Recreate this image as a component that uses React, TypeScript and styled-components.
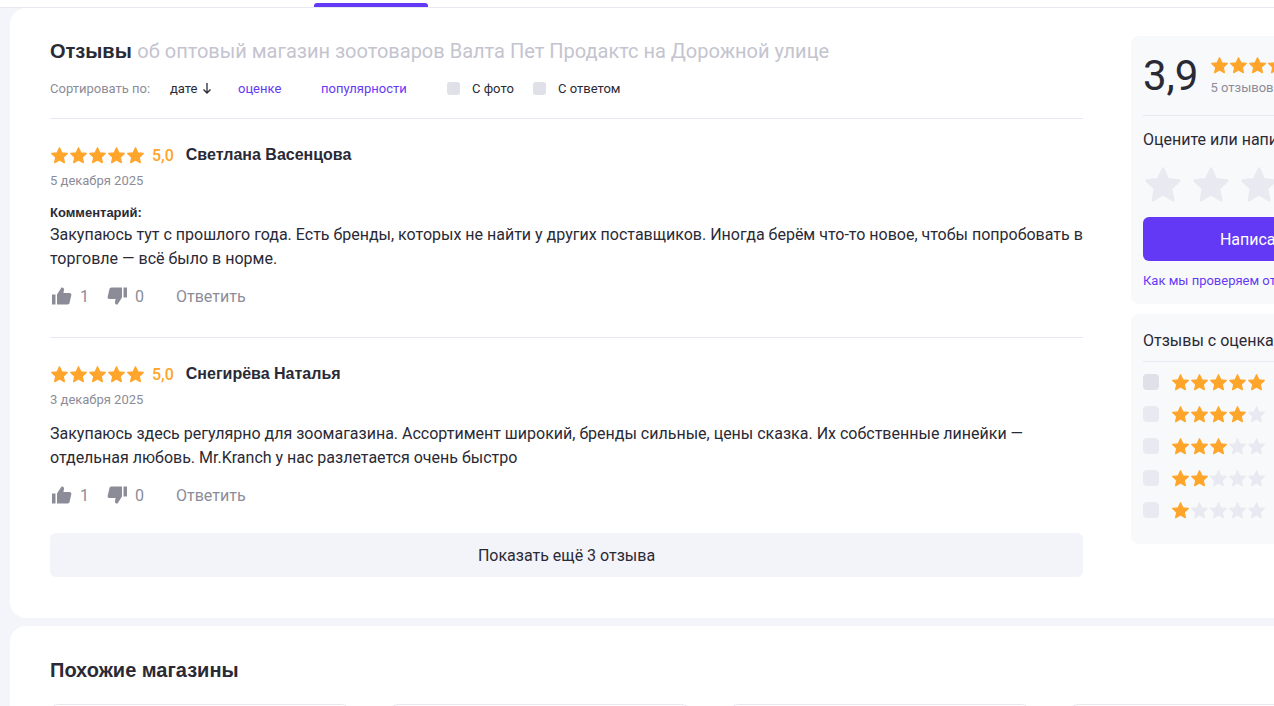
import { createGlobalStyle } from "styled-components"
import styled from "styled-components"

const GlobalStyle = createGlobalStyle`
  html, body {
    margin: 0;
    padding: 0;
    background: #f4f5fa;
    font-family: "Roboto", "Liberation Sans", sans-serif;
    color: #2a2a36;
    overflow: hidden;
  }
  * { box-sizing: border-box; }
`

const Page = styled.div`
  width: 1274px;
  height: 706px;
  overflow: hidden;
`

const TopBar = styled.div`
  height: 8px;
  background: #fff;
  border-bottom: 1px solid #e8e8f0;
  padding-left: 314px;
  display: flex;
  align-items: flex-end;
`

const TabMarker = styled.div`
  width: 114px;
  height: 4px;
  background: #6439f5;
  border-radius: 3px 3px 0 0;
`

const Card = styled.section`
  width: 1400px;
  margin: 0 0 8px 10px;
  background: #fff;
  border-radius: 16px;
`

const ReviewsCard = styled(Card)`
  height: 610px;
  padding: 28px 40px 0;
  display: flex;
  gap: 48px;
`

const SimilarCard = styled(Card)`
  height: 200px;
  padding: 32px 40px 0;
`

const Main = styled.div`
  width: 1033px;
  flex: none;
`

const Title = styled.h2`
  margin: 0;
  font: bold 20px/30px "Liberation Sans", sans-serif;
  color: #2a2a36;

  span {
    font: 400 20px/30px "Roboto", sans-serif;
    color: #c4c4cf;
  }
`

const SortRow = styled.div`
  display: flex;
  align-items: center;
  height: 18px;
  margin-top: 13px;
  padding-bottom: 0;
  font-size: 13px;
`

const SortLabel = styled.span`
  color: #8c8c99;
  width: 120px;
`

const SortOption = styled.span<{ $active?: boolean; $w: number }>`
  width: ${(p) => p.$w}px;
  color: ${(p) => (p.$active ? "#2a2a36" : "#6439f5")};
  display: flex;
  align-items: center;
  gap: 4px;
`

const Check = styled.span<{ $size?: number; $dark?: boolean }>`
  display: block;
  flex: none;
  width: 13px;
  height: 13px;
  border-radius: 3px;
  background: #dfe0e8;
`

const FilterLabel = styled.label<{ $w: number }>`
  display: flex;
  align-items: center;
  gap: 12px;
  width: ${(p) => p.$w}px;
  color: #2a2a36;
`

const Divider = styled.div`
  height: 1px;
  margin-top: 21px;
  background: #e8e8f0;
`

const Review = styled.article`
  padding-top: 26px;
  height: 219px;
  border-bottom: 1px solid #e8e8f0;

  &:last-of-type {
    border-bottom: 0;
    height: 195px;
  }
`

const ReviewHead = styled.div`
  display: flex;
  align-items: center;
  height: 20px;
`

const StarRow = styled.div<{ $gap: number }>`
  display: flex;
  gap: ${(p) => p.$gap}px;
`

const Score = styled.span`
  margin-left: 7px;
  font-size: 16px;
  font-weight: 500;
  color: #ffa52b;
`

const Author = styled.span`
  margin-left: 12px;
  font: bold 16px/20px "Liberation Sans", sans-serif;
  color: #2a2a36;
`

const DateText = styled.div`
  margin-top: 8px;
  font-size: 13px;
  line-height: 16px;
  color: #8c8c99;
`

const CommentLabel = styled.div`
  margin-top: 16px;
  font: bold 13px/16px "Liberation Sans", sans-serif;
  color: #2a2a36;
`

const Body = styled.p<{ $top: number }>`
  margin: ${(p) => p.$top}px 0 0;
  font-size: 16px;
  line-height: 24px;
  color: #2a2a36;
`

const Actions = styled.div`
  display: flex;
  align-items: center;
  height: 24px;
  margin-top: 13px;
  font-size: 16px;
  color: #8c8c99;
`

const Vote = styled.span`
  display: flex;
  align-items: center;
  gap: 6px;
  width: 55px;
`

const Reply = styled.span`
  margin-left: 16px;
`

const MoreButton = styled.div`
  height: 44px;
  border-radius: 6px;
  background: #f3f4f9;
  display: flex;
  align-items: center;
  justify-content: center;
  font-size: 16px;
  color: #2a2a36;
`

const Aside = styled.aside`
  width: 300px;
  flex: none;
  display: flex;
  flex-direction: column;
  gap: 10px;
`

const Panel = styled.div<{ $h: number }>`
  height: ${(p) => p.$h}px;
  padding: 0 12px;
  background: #f8f9fb;
  border-radius: 8px;
`

const RatingHead = styled.div`
  display: flex;
  align-items: center;
  height: 80px;
  border-bottom: 1px solid #e8e8f0;
  gap: 12px;
`

const BigRating = styled.div`
  font-size: 42px;
  line-height: 48px;
  color: #2a2a36;
`

const RatingCount = styled.div`
  margin-top: 5px;
  font-size: 13px;
  line-height: 16px;
  color: #8c8c99;
`

const PanelText = styled.div`
  font-size: 16px;
  line-height: 24px;
  color: #2a2a36;
`

const RatePrompt = styled(PanelText)`
  margin-top: 12px;
`

const BigStars = styled(StarRow)`
  margin-top: 13px;
`

const WriteButton = styled.div`
  margin-top: 12px;
  height: 44px;
  border-radius: 6px;
  background: #6439f5;
  color: #fff;
  font-size: 16px;
  display: flex;
  align-items: center;
  justify-content: center;
`

const VerifyLink = styled.div`
  margin-top: 12px;
  font-size: 13px;
  line-height: 16px;
  color: #6439f5;
`

const FilterTitle = styled(PanelText)`
  height: 48px;
  padding-top: 15px;
  border-bottom: 1px solid #e8e8f0;
`

const FilterList = styled.div`
  display: flex;
  flex-direction: column;
  gap: 12px;
  margin-top: 10px;
`

const FilterRow = styled.div`
  display: flex;
  align-items: center;
  gap: 12px;
  height: 20px;
`

const RateCheck = styled.span<{ $hover?: boolean }>`
  width: 16px;
  height: 16px;
  border-radius: 4px;
  background: ${(p) => (p.$hover ? "#dfe0e8" : "#e9eaf1")};
`

const SimilarTitle = styled.h2`
  margin: 0;
  font: bold 20px/24px "Liberation Sans", sans-serif;
  color: #2a2a36;
`

const ShopGrid = styled.div`
  display: grid;
  grid-template-columns: repeat(4, 300px);
  gap: 40px;
  margin-top: 22px;
`

const ShopCard = styled.div`
  height: 120px;
  border: 1px solid #e8e8f0;
  border-radius: 8px;
`

const Star = ({ size, color = "#ffa52b" }: { size: number; color?: string }) => (
  <svg width={size} height={size} viewBox="0 0 24 24">
    <path
      fill={color}
      stroke={color}
      strokeWidth="1.6"
      strokeLinejoin="round"
      d="M12 2.2l2.9 6.4 6.9.8-5.1 4.7 1.4 6.9-6.100-3.500-6.100 3.500 1.400-6.900-5.100-4.700 6.900-.8z"
    />
  </svg>
)

const Stars = ({ filled, size, gap }: { filled: number; size: number; gap: number }) => (
  <StarRow $gap={gap}>
    {[0, 1, 2, 3, 4].map((i) => (
      <Star key={i} size={size} color={i < filled ? "#ffa52b" : "#e9eaf1"} />
    ))}
  </StarRow>
)

const ThumbUp = () => (
  <svg width="24" height="24" viewBox="0 0 24 24" fill="#8c8c99">
    <path d="M2 10.500h3.500v10H2z" />
    <path d="M7 20.500v-10l4.500-7c1.700-.4 2.800.8 2.500 2.500l-.6 3h6.100c1.400 0 2.100 1 1.800 2.300l-1.700 7.500c-.2.900-.9 1.700-2 1.700z" />
  </svg>
)

const ThumbDown = () => (
  <svg width="24" height="24" viewBox="0 0 24 24" fill="#8c8c99">
    <path d="M22 3.500h-3.500v10H22z" />
    <path d="M17 3.500v10l-4.500 7c-1.700.4-2.800-.8-2.500-2.500l.6-3H4.500c-1.400 0-2.100-1-1.800-2.300l1.700-7.500c.2-.9.9-1.700 2-1.700z" />
  </svg>
)

const ArrowDown = () => (
  <svg width="12" height="12" viewBox="0 0 12 12" fill="none" stroke="#2a2a36" strokeWidth="1.300">
    <path d="M6 1v10M2.500 7.500L6 11l3.500-3.500" />
  </svg>
)

const reviews = [
  {
    author: "Светлана Васенцова",
    date: "5 декабря 2025",
    comment: true,
    text: "Закупаюсь тут с прошлого года. Есть бренды, которых не найти у других поставщиков. Иногда берём что-то новое, чтобы попробовать в торговле — всё было в норме.",
  },
  {
    author: "Снегирёва Наталья",
    date: "3 декабря 2025",
    comment: false,
    text: "Закупаюсь здесь регулярно для зоомагазина. Ассортимент широкий, бренды сильные, цены сказка. Их собственные линейки — отдельная любовь. Mr.Kranch у нас разлетается очень быстро",
  },
]

const App = () => {
  return (
    <Page>
      <GlobalStyle />
      <TopBar>
        <TabMarker />
      </TopBar>
      <ReviewsCard>
        <Main>
          <Title>
            Отзывы <span>об оптовый магазин зоотоваров Валта Пет Продактс на Дорожной улице</span>
          </Title>
          <SortRow>
            <SortLabel>Сортировать по:</SortLabel>
            <SortOption $active $w={68}>
              дате <ArrowDown />
            </SortOption>
            <SortOption $w={83}>оценке</SortOption>
            <SortOption $w={126}>популярности</SortOption>
            <FilterLabel $w={86}>
              <Check />С фото
            </FilterLabel>
            <FilterLabel $w={100}>
              <Check />С ответом
            </FilterLabel>
          </SortRow>
          <Divider />
          {reviews.map((r) => (
            <Review key={r.author}>
              <ReviewHead>
                <Stars filled={5} size={19} gap={0} />
                <Score>5,0</Score>
                <Author>{r.author}</Author>
              </ReviewHead>
              <DateText>{r.date}</DateText>
              {r.comment && <CommentLabel>Комментарий:</CommentLabel>}
              <Body $top={r.comment ? 2 : 14}>{r.text}</Body>
              <Actions>
                <Vote>
                  <ThumbUp />1
                </Vote>
                <Vote>
                  <ThumbDown />0
                </Vote>
                <Reply>Ответить</Reply>
              </Actions>
            </Review>
          ))}
          <MoreButton>Показать ещё 3 отзыва</MoreButton>
        </Main>
        <Aside>
          <Panel $h={268}>
            <RatingHead>
              <BigRating>3,9</BigRating>
              <div>
                <Stars filled={4} size={19} gap={0} />
                <RatingCount>5 отзывов</RatingCount>
              </div>
            </RatingHead>
            <RatePrompt>Оцените или напишите отзыв</RatePrompt>
            <BigStars $gap={8}>
              {[0, 1, 2, 3, 4].map((i) => (
                <Star key={i} size={40} color="#e9eaf1" />
              ))}
            </BigStars>
            <WriteButton>Написать отзыв</WriteButton>
            <VerifyLink>Как мы проверяем отзывы</VerifyLink>
          </Panel>
          <Panel $h={230}>
            <FilterTitle>Отзывы с оценками</FilterTitle>
            <FilterList>
              {[5, 4, 3, 2, 1].map((n) => (
                <FilterRow key={n}>
                  <RateCheck $hover={n === 5} />
                  <Stars filled={n} size={19} gap={0} />
                </FilterRow>
              ))}
            </FilterList>
          </Panel>
        </Aside>
      </ReviewsCard>
      <SimilarCard>
        <SimilarTitle>Похожие магазины</SimilarTitle>
        <ShopGrid>
          <ShopCard />
          <ShopCard />
          <ShopCard />
          <ShopCard />
        </ShopGrid>
      </SimilarCard>
    </Page>
  )
}

export default App
